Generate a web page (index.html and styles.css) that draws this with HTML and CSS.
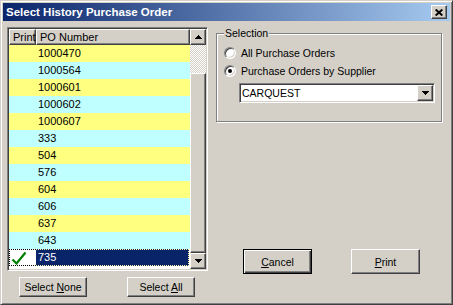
FILE: index.html
```html
<!DOCTYPE html>
<html lang="en">
<head>
  <meta charset="UTF-8">
  <title>Select History Purchase Order</title>
  <link rel="stylesheet" href="styles.css">
</head>
<body>

<div class="window">
  <div class="titlebar">
    <span class="title">Select History Purchase Order</span>
    <button class="close raised">
      <svg width="8" height="7" viewBox="0 0 8 7"><path d="M0.6 0.5L7.4 6.5M7.4 0.5L0.6 6.5" stroke="#000" stroke-width="2"/></svg>
    </button>
  </div>

  <div class="content">
    <div class="left">
      <div class="listbox">
        <div class="grid">
          <div class="row head">
            <div class="cell c-print raised">Print</div>
            <div class="cell c-po raised">PO Number</div>
          </div>
          <div class="row yellow"><div class="c-print"></div><div class="c-po">1000470</div></div>
          <div class="row cyan"><div class="c-print"></div><div class="c-po">1000564</div></div>
          <div class="row yellow"><div class="c-print"></div><div class="c-po">1000601</div></div>
          <div class="row cyan"><div class="c-print"></div><div class="c-po">1000602</div></div>
          <div class="row yellow"><div class="c-print"></div><div class="c-po">1000607</div></div>
          <div class="row cyan"><div class="c-print"></div><div class="c-po">333</div></div>
          <div class="row yellow"><div class="c-print"></div><div class="c-po">504</div></div>
          <div class="row cyan"><div class="c-print"></div><div class="c-po">576</div></div>
          <div class="row yellow"><div class="c-print"></div><div class="c-po">604</div></div>
          <div class="row cyan"><div class="c-print"></div><div class="c-po">606</div></div>
          <div class="row yellow"><div class="c-print"></div><div class="c-po">637</div></div>
          <div class="row cyan"><div class="c-print"></div><div class="c-po">643</div></div>
          <div class="row sel">
            <div class="c-print">
              <svg width="16" height="14" viewBox="0 0 16 14"><path d="M1.5 8.5L5.5 12.5L14.5 1.5" fill="none" stroke="#008000" stroke-width="2.2"/></svg>
            </div>
            <div class="c-po">735</div>
          </div>
        </div>
        <div class="scrollbar">
          <div class="sb-btn raised">
            <svg width="7" height="4" viewBox="0 0 7 4" shape-rendering="crispEdges"><polygon points="3.5,0 7,4 0,4" fill="#000"/></svg>
          </div>
          <div class="sb-track"></div>
          <div class="sb-thumb raised"></div>
          <div class="sb-btn raised">
            <svg width="7" height="4" viewBox="0 0 7 4" shape-rendering="crispEdges"><polygon points="0,0 7,0 3.5,4" fill="#000"/></svg>
          </div>
        </div>
      </div>
      <div class="btn-row left-btns">
        <button class="btn small">Select <u>N</u>one</button>
        <button class="btn small">Select <u>A</u>ll</button>
      </div>
    </div>

    <div class="right">
      <fieldset class="group">
        <legend>Selection</legend>
        <div class="option"><span class="radio"></span>All Purchase Orders</div>
        <div class="option"><span class="radio checked"></span>Purchase Orders by Supplier</div>
        <div class="combo">
          <span class="combo-text">CARQUEST</span>
          <span class="combo-btn raised">
            <svg width="7" height="4" viewBox="0 0 7 4" shape-rendering="crispEdges"><polygon points="0,0 7,0 3.5,4" fill="#000"/></svg>
          </span>
        </div>
      </fieldset>
      <div class="btn-row right-btns">
        <button class="btn big default"><u>C</u>ancel</button>
        <button class="btn big"><u>P</u>rint</button>
      </div>
    </div>
  </div>
</div>

</body>
</html>
```

FILE: styles.css
```css
* {
  box-sizing: border-box;
}

body {
  margin: 0;
  font-family: "Liberation Sans", Arial, sans-serif;
  font-size: 10.5px;
  color: #000;
  background-color: #D4D0C8;
}

.raised {
  background-color: #D4D0C8;
  border: 1px solid;
  border-color: #fff #404040 #404040 #fff;
  box-shadow: inset -1px -1px #808080;
}

.window {
  width: 453px;
  height: 305px;
  padding: 2px;
  display: flex;
  flex-direction: column;
  background-color: #D4D0C8;
  border: 1px solid;
  border-color: #D4D0C8 #404040 #404040 #D4D0C8;
  box-shadow: inset 1px 1px #fff, inset -1px -1px #808080;
}

.titlebar {
  height: 18px;
  margin-bottom: 1px;
  padding: 0 3px 0 3px;
  display: flex;
  align-items: center;
  justify-content: space-between;
  background: linear-gradient(to right, #0A246A, #A6CAF0);
}

.title {
  color: #fff;
  font-weight: bold;
  font-size: 11.5px;
}

.close {
  width: 16px;
  height: 14px;
  padding: 0;
  display: flex;
  align-items: center;
  justify-content: center;
}

.content {
  flex: 1;
  display: flex;
  gap: 8px;
  padding: 5px 8px 0 4px;
}

.left {
  width: 201px;
  display: flex;
  flex-direction: column;
}

.listbox {
  height: 244px;
  padding: 1px;
  display: flex;
  border: 1px solid;
  border-color: #808080 #fff #fff #808080;
  box-shadow: inset 1px 1px #404040, inset -1px -1px #D4D0C8;
}

.grid {
  flex: 1;
  background-color: #fff;
  overflow: hidden;
}

.row {
  display: flex;
  height: 17px;
  line-height: 17px;
  font-size: 11px;
}

.c-print {
  width: 27px;
  flex: none;
}

.c-po {
  flex: 1;
  padding-left: 2px;
}

.row.head {
  height: 16px;
  line-height: 14px;
  font-size: 11px;
}

.head .cell {
  padding-left: 3px;
}

.yellow {
  background-color: #FFFF80;
}

.cyan {
  background-color: #C0FFFF;
}

.sel .c-print {
  background-color: #fff;
  border: 1px dotted #000;
  border-right: 0;
  padding: 1px 0 0 1px;
}

.sel .c-po {
  background-color: #0A246A;
  color: #fff;
  border: 1px dotted #FFFFA0;
  border-left: 0;
  margin-right: 1px;
  line-height: 15px;
}

.scrollbar {
  width: 16px;
  display: flex;
  flex-direction: column;
}

.sb-btn {
  height: 16px;
  display: flex;
  align-items: center;
  justify-content: center;
}

.sb-track {
  height: 28px;
  background: repeating-conic-gradient(#fff 0 25%, #D4D0C8 0 50%) 0 0 / 2px 2px;
}

.sb-thumb {
  flex: 1;
}

.btn-row {
  display: flex;
  justify-content: space-between;
}

.left-btns {
  margin-top: 6px;
  padding: 0 13px 0 12px;
}

.btn {
  font: inherit;
  color: #000;
  padding: 0;
  background-color: #D4D0C8;
  border: 1px solid;
  border-color: #fff #404040 #404040 #fff;
  box-shadow: inset -1px -1px #808080;
}

.btn.small {
  width: 68px;
  height: 20px;
}

.btn.big {
  width: 69px;
  height: 25px;
}

.btn.default {
  border: 1px solid #000;
  box-shadow: inset 1px 1px #fff, inset -1px -1px #404040, inset -2px -2px #808080;
}

.right {
  width: 226px;
  display: flex;
  flex-direction: column;
  padding-bottom: 28px;
}

.group {
  margin: 0;
  min-width: 0;
  height: 95px;
  padding: 5px 6px 0 7px;
  border: 1px solid #808080;
  box-shadow: inset 1px 1px #fff, 1px 1px #fff;
}

.group legend {
  padding: 0 1px;
  line-height: 12px;
  background-color: #D4D0C8;
}

.option {
  height: 18px;
  display: flex;
  align-items: center;
  gap: 5px;
}

.radio {
  width: 12px;
  height: 12px;
  border-radius: 50%;
  background-color: #fff;
  border: 1px solid;
  border-color: #808080 #fff #fff #808080;
  box-shadow: inset 1px 1px #404040, inset -1px -1px #D4D0C8;
  display: flex;
  align-items: center;
  justify-content: center;
}

.radio.checked::after {
  content: "";
  width: 4px;
  height: 4px;
  border-radius: 50%;
  background-color: #000;
}

.combo {
  margin: 3px 0 0 15px;
  height: 20px;
  padding: 1px;
  display: flex;
  align-items: center;
  background-color: #fff;
  border: 1px solid;
  border-color: #808080 #fff #fff #808080;
  box-shadow: inset 1px 1px #404040, inset -1px -1px #D4D0C8;
}

.combo-text {
  flex: 1;
  padding-left: 1px;
}

.combo-btn {
  width: 16px;
  height: 16px;
  display: flex;
  align-items: center;
  justify-content: center;
}

.right-btns {
  margin-top: auto;
  padding: 0 22px 0 27px;
}
```
